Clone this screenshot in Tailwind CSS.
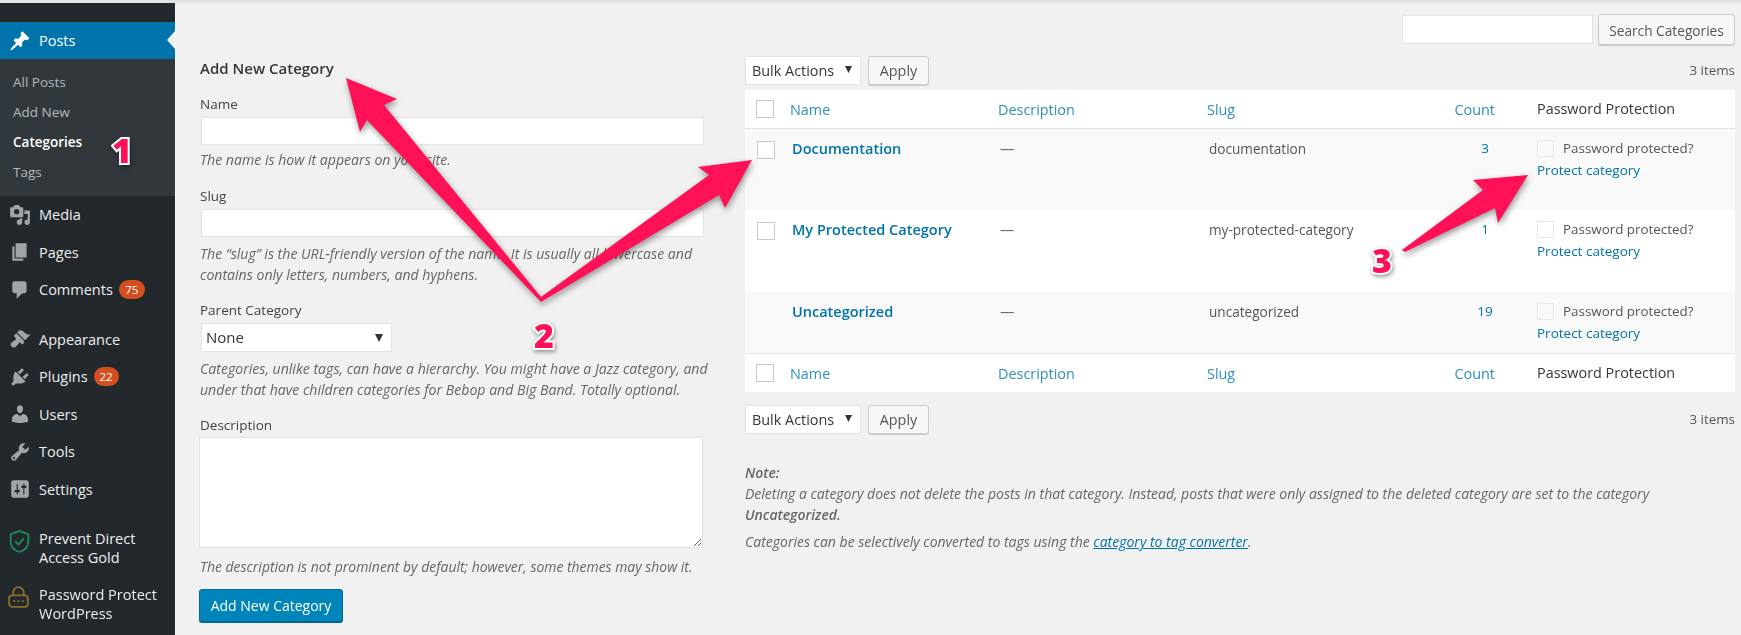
<!DOCTYPE html>
<html lang="en">
<head>
<meta charset="utf-8">
<title>Categories</title>
<script src="https://cdn.jsdelivr.net/npm/@tailwindcss/browser@4"></script>
</head>
<body class="m-0 h-[635px] w-[1741px] overflow-hidden bg-[#f1f1f1] font-['Open_Sans',sans-serif] text-[14.4px] leading-[21px] text-[#444]">
<div class="relative h-[635px] w-[1741px] overflow-hidden blur-[0.6px]">
  <div class="h-[3px] bg-[#e4e2e2]"></div>
  <div class="flex h-[632px]">
    <!-- sidebar -->
    <aside class="h-full w-[176px] shrink-0 border-r border-[#f8f8f8] bg-[#23282d] pt-[19px] text-[14.5px] text-[#eeeeee]">
      <div class="relative flex h-[37px] items-center bg-[#0073aa] text-white">
        <span class="flex w-[39px] justify-center"><svg class="h-[22px] w-[22px] fill-white" viewBox="0 0 20 20"><path d="M10.44 3.02l1.82-1.82 6.36 6.35-1.83 1.82c-1.05-.68-2.48-.57-3.41.36l-.75.75c-.92.93-1.04 2.35-.35 3.41l-1.83 1.82-2.41-2.41-2.8 2.79c-.42.42-3.38 2.71-3.8 2.29s1.86-3.39 2.28-3.81l2.79-2.79L4.1 9.36l1.83-1.82c1.05.69 2.48.57 3.4-.36l.75-.75c.93-.92 1.05-2.35.36-3.41z"/></svg></span>
        <span>Posts</span>
        <span class="absolute right-0 top-[9px] h-0 w-0 border-y-[9px] border-r-[8px] border-y-transparent border-r-[#f1f1f1]"></span>
      </div>
      <ul class="bg-[#32373c] px-[13px] py-[8px] text-[13.5px] text-[#b4b9be]">
        <li class="flex h-[30.25px] items-center">All Posts</li>
        <li class="flex h-[30.25px] items-center">Add New</li>
        <li class="flex h-[30.25px] items-center font-semibold text-white">Categories</li>
        <li class="flex h-[30.25px] items-center">Tags</li>
      </ul>
      <nav>
        <div class="flex h-[37.5px] items-center"><span class="flex w-[39px] justify-center"><svg class="h-[22px] w-[22px] fill-[#a0a5aa]" viewBox="0 0 20 20"><path d="M13 11V4c0-.55-.45-1-1-1h-1.67L9 1H5L3.67 3H2c-.55 0-1 .45-1 1v7c0 .55.45 1 1 1h10c.55 0 1-.45 1-1zM7 4.5c1.38 0 2.5 1.12 2.5 2.5S8.38 9.5 7 9.5 4.5 8.38 4.5 7 5.62 4.5 7 4.5zM14 6h5v10.5c0 1.38-1.12 2.5-2.5 2.5S14 17.88 14 16.5s1.12-2.5 2.5-2.5c.17 0 .34.02.5.05V9h-3V6zm-4 8.05V13h2v3.5c0 1.38-1.12 2.5-2.5 2.5S7 17.88 7 16.5 8.12 14 9.5 14c.17 0 .34.02.5.05z"/></svg></span><span>Media</span></div>
        <div class="flex h-[37.5px] items-center"><span class="flex w-[39px] justify-center"><svg class="h-[22px] w-[22px] fill-[#a0a5aa]" viewBox="0 0 20 20"><path d="M6 15V2h10v13H6zm-1 1h8v2H3V5h2v11z"/></svg></span><span>Pages</span></div>
        <div class="flex h-[37.5px] items-center"><span class="flex w-[39px] justify-center"><svg class="h-[22px] w-[22px] fill-[#a0a5aa]" viewBox="0 0 20 20"><path d="M5 2h9c1.1 0 2 .9 2 2v7c0 1.1-.9 2-2 2h-2l-5 5v-5H5c-1.1 0-2-.9-2-2V4c0-1.1.9-2 2-2z"/></svg></span><span>Comments</span><span class="ml-[6px] flex h-[19px] w-[26px] items-center justify-center rounded-full bg-[#d54e21] text-[11.5px] text-white">75</span></div>
      </nav>
      <nav class="mt-[12px]">
        <div class="flex h-[37.5px] items-center"><span class="flex w-[39px] justify-center"><svg class="h-[22px] w-[22px] fill-[#a0a5aa]" viewBox="0 0 20 20"><path d="M14.48 11.06L7.41 3.99l1.5-1.5c.5-.56 2.3-.47 3.51.32 1.21.8 1.43 1.28 2.91 2.1 1.18.64 2.45 1.26 4.45.85zm-.71.71L6.7 4.7 4.93 6.47c-.39.39-.39 1.02 0 1.41l1.06 1.06c.39.39.39 1.03 0 1.42-.6.6-1.43 1.11-2.21 1.69-.35.26-.7.53-1.01.84C1.43 13.23.99 15.55 2.22 16.78c.61.61 1.4.92 2.17.91.79 0 1.63-.39 2.18-.94.31-.31.58-.66.84-1.01.58-.78 1.09-1.61 1.69-2.21.39-.39 1.03-.39 1.42 0l1.06 1.06c.39.39 1.02.39 1.41 0z"/></svg></span><span>Appearance</span></div>
        <div class="flex h-[37.5px] items-center"><span class="flex w-[39px] justify-center"><svg class="h-[22px] w-[22px] fill-[#a0a5aa]" viewBox="0 0 20 20"><path d="M13.11 4.36L9.87 7.6 8 5.73l3.24-3.24c.35-.34 1.05-.2 1.56.32.52.51.66 1.21.31 1.55zm-8 1.77l.91-1.12 9.01 9.01-1.19.84c-.71.71-2.63 1.16-3.82 1.16H6.14L4.9 17.26c-.59.59-1.54.59-2.12 0-.59-.58-.59-1.53 0-2.12l1.24-1.24v-3.88c0-1.13.4-3.19 1.09-3.89zm7.26 3.97l3.24-3.24c.34-.35 1.04-.21 1.55.31.52.51.66 1.21.31 1.55l-3.24 3.25z"/></svg></span><span>Plugins</span><span class="ml-[6px] flex h-[19px] w-[25px] items-center justify-center rounded-full bg-[#d54e21] text-[11.5px] text-white">22</span></div>
        <div class="flex h-[37.5px] items-center"><span class="flex w-[39px] justify-center"><svg class="h-[22px] w-[22px] fill-[#a0a5aa]" viewBox="0 0 20 20"><path d="M10 9.25c-2.27 0-2.73-3.44-2.73-3.44C7 4.02 7.82 2 9.97 2c2.16 0 2.98 2.02 2.71 3.81 0 0-.41 3.44-2.68 3.44zm0 2.57L12.72 10c2.39 0 4.52 2.33 4.52 4.53v2.49s-3.65 1.13-7.24 1.13c-3.65 0-7.24-1.13-7.24-1.13v-2.49c0-2.25 1.94-4.48 4.47-4.48z"/></svg></span><span>Users</span></div>
        <div class="flex h-[37.5px] items-center"><span class="flex w-[39px] justify-center"><svg class="h-[22px] w-[22px] fill-[#a0a5aa]" viewBox="0 0 20 20"><path d="M16.68 9.77c-1.34 1.34-3.3 1.67-4.95.99l-5.41 6.52c-.99.99-2.59.99-3.58 0s-.99-2.59 0-3.57l6.52-5.42c-.68-1.65-.35-3.61.99-4.95 1.28-1.28 3.12-1.62 4.72-1.06l-2.89 2.89 2.82 2.82 2.86-2.87c.53 1.58.18 3.39-1.08 4.65zM3.81 16.21c.4.39 1.04.39 1.43 0 .4-.4.4-1.04 0-1.43-.39-.4-1.03-.4-1.43 0-.39.39-.39 1.03 0 1.43z"/></svg></span><span>Tools</span></div>
        <div class="flex h-[37.5px] items-center"><span class="flex w-[39px] justify-center"><svg class="h-[22px] w-[22px] fill-[#a0a5aa]" viewBox="0 0 20 20"><path d="M18 16V4c0-1.1-.9-2-2-2H4c-1.1 0-2 .9-2 2v12c0 1.1.9 2 2 2h12c1.1 0 2-.9 2-2zM8 11h1c.55 0 1 .45 1 1s-.45 1-1 1H8v1.5c0 .28-.22.5-.5.5s-.5-.22-.5-.5V13H6c-.55 0-1-.45-1-1s.45-1 1-1h1V5.5c0-.28.22-.5.5-.5s.5.22.5.5V11zm5-2h-1c-.55 0-1-.45-1-1s.45-1 1-1h1V5.5c0-.28.22-.5.5-.5s.5.22.5.5V7h1c.55 0 1 .45 1 1s-.45 1-1 1h-1v5.5c0 .28-.22.5-.5.5s-.5-.22-.5-.5V9z"/></svg></span><span>Settings</span></div>
      </nav>
      <nav class="mt-[12px] leading-[19px]">
        <div class="flex h-[56px] items-center"><span class="-mt-[14px] flex w-[39px] justify-center"><svg class="h-[25px] w-[25px] fill-none stroke-[#1e8a5a] stroke-[1.8]" viewBox="0 0 24 24"><path d="M12 2l8.5 3v7c0 5-3.5 8.500-8.500 10C7 20.500 3.500 17 3.500 12V5z"/><path d="M8 12l3 3 5-6"/></svg></span><span>Prevent Direct<br>Access Gold</span></div>
        <div class="flex h-[56px] items-center"><span class="-mt-[14px] flex w-[39px] justify-center"><svg class="h-[25px] w-[25px] fill-none stroke-[#8a6d2b] stroke-[1.8]" viewBox="0 0 24 24"><rect x="2" y="10" width="18" height="11" rx="3"/><path d="M6 10V7a5 5 0 0 1 10 0v3"/><path d="M6 15.500h10" stroke-dasharray="2 2"/></svg></span><span>Password Protect<br>WordPress</span></div>
      </nav>
    </aside>

    <!-- add form -->
    <section class="w-[569px] shrink-0 pl-[24px] pt-[54.5px]">
      <h2 class="text-[15px] font-semibold text-[#32373c]">Add New Category</h2>
      <label class="mt-[15px] block text-[13.5px]">Name</label>
      <input class="ml-[1px] mt-[2.5px] block h-[28px] w-[503px] border border-[#e3e3e3] bg-white" type="text">
      <p class="mt-[4px] text-[14.1px] italic text-[#666]">The name is how it appears on your site.</p>
      <label class="mt-[16px] block text-[13.5px]">Slug</label>
      <input class="ml-[1px] mt-[2px] block h-[28px] w-[503px] border border-[#e3e3e3] bg-white" type="text">
      <p class="mt-[5.5px] text-[14.1px] italic text-[#666]">The “slug” is the URL-friendly version of the name. It is usually all lowercase and<br>contains only letters, numbers, and hyphens.</p>
      <label class="mt-[15px] block text-[13.5px]">Parent Category</label>
      <div class="relative ml-[1px] mt-[2.5px] h-[29px] w-[191px]">
        <select class="block h-full w-full appearance-none rounded-none border border-[#e3e3e3] bg-white pl-[4px] text-[15px] text-[#32373c]"><option>None</option></select>
        <svg class="absolute right-[9px] top-[11px] h-[8px] w-[8px] fill-[#333]" viewBox="0 0 8 8"><path d="M0 0h8L4 8z"/></svg>
      </div>
      <p class="mt-[5.5px] text-[14.1px] italic text-[#666]">Categories, unlike tags, can have a hierarchy. You might have a Jazz category, and<br>under that have children categories for Bebop and Big Band. Totally optional.</p>
      <label class="mt-[15.5px] block text-[13.5px]">Description</label>
      <textarea class="-ml-[1px] mt-[1px] block h-[111px] w-[504px] border border-[#e3e3e3] bg-white"></textarea>
      <p class="mt-[7.5px] text-[13.95px] italic text-[#666]">The description is not prominent by default; however, some themes may show it.</p>
      <button class="-ml-[1px] mt-[12.5px] flex h-[33px] w-[144px] items-center justify-center rounded-[3px] border border-[#006799] bg-[#0085ba] text-[14px] text-white shadow-[0_1px_0_#006799]">Add New Category</button>
    </section>

    <!-- list -->
    <section class="w-[990px] shrink-0">
      <div class="mt-[11px] flex h-[31px] items-center justify-end">
        <input class="h-[29px] w-[191px] border border-[#e3e3e3] bg-white" type="text">
        <button class="ml-[5px] h-[31px] w-[137px] rounded-[3px] border border-[#cccccc] bg-[#f7f7f7] pt-[1px] text-[13.7px] text-[#555] shadow-[0_1px_0_#cccccc]">Search Categories</button>
      </div>
      <div class="mt-[10px] flex h-[30px] items-center">
        <div class="relative h-[29px] w-[116px]">
          <select class="block h-full w-full appearance-none rounded-none border border-[#e3e3e3] bg-white pl-[6px] pt-[1px] text-[14.4px] text-[#32373c]"><option>Bulk Actions</option></select>
          <svg class="absolute right-[9px] top-[10px] h-[7px] w-[7px] fill-[#333]" viewBox="0 0 8 8"><path d="M0 0h8L4 8z"/></svg>
        </div>
        <button class="ml-[7px] h-[29px] w-[61px] rounded-[3px] border border-[#cccccc] bg-[#f7f7f7] pt-[1px] text-[14.4px] text-[#555] shadow-[0_1px_0_#cccccc]">Apply</button>
        <span class="ml-auto text-[13.4px] text-[#555]">3 items</span>
      </div>
      <table class="mt-[5px] w-[990px] table-fixed border-collapse bg-white">
        <colgroup><col class="w-[36px]"><col class="w-[208px]"><col class="w-[209px]"><col class="w-[244px]"><col class="w-[86px]"><col></colgroup>
        <thead>
          <tr class="h-[38px] border-b border-[#e5e5e5] text-[#2d8fbe]">
            <th class="p-0 pl-[11px] align-middle"><span class="block h-[18px] w-[18px] border border-[#c8c8c8] bg-white"></span></th>
            <th class="pl-[9px] pt-[2px] text-left font-normal">Name</th>
            <th class="pl-[9px] pt-[2px] text-left font-normal">Description</th>
            <th class="pl-[9px] pt-[2px] text-left font-normal">Slug</th>
            <th class="pr-[33px] pt-[2px] text-right font-normal">Count</th>
            <th class="pl-[9px] text-left font-normal text-[#32373c]">Password Protection</th>
          </tr>
        </thead>
        <tbody class="align-top">
          <tr class="h-[82px] bg-[#f9f9f9]">
            <td class="pl-[12px] pt-[12px]"><span class="block h-[18px] w-[18px] border border-[#c8c8c8] bg-white"></span></td>
            <td class="pl-[11px] pt-[9px] text-[14.5px] font-semibold text-[#0073aa]">Documentation</td>
            <td class="pl-[11px] pt-[9px] text-[#666]">—</td>
            <td class="pl-[11px] pt-[9px] text-[13.6px] text-[#555]">documentation</td>
            <td class="pt-[9px] text-center text-[13.5px] text-[#0073aa]">3</td>
            <td class="pl-[9px] pt-[9px] text-[13.4px] text-[#555]"><span class="flex items-center"><span class="mr-[9px] block h-[17px] w-[17px] border border-[#e8e8e8]"></span>Password protected?</span><span class="mt-[1px] block text-[13.5px] text-[#0073aa]">Protect category</span></td>
          </tr>
          <tr class="h-[82px]">
            <td class="pl-[12px] pt-[12px]"><span class="block h-[18px] w-[18px] border border-[#c8c8c8] bg-white"></span></td>
            <td class="pl-[11px] pt-[9px] text-[14.5px] font-semibold text-[#0073aa]">My Protected Category</td>
            <td class="pl-[11px] pt-[9px] text-[#666]">—</td>
            <td class="pl-[11px] pt-[9px] text-[13.6px] text-[#555]">my-protected-category</td>
            <td class="pt-[9px] text-center text-[13.5px] text-[#0073aa]">1</td>
            <td class="pl-[9px] pt-[9px] text-[13.4px] text-[#555]"><span class="flex items-center"><span class="mr-[9px] block h-[17px] w-[17px] border border-[#e8e8e8]"></span>Password protected?</span><span class="mt-[1px] block text-[13.5px] text-[#0073aa]">Protect category</span></td>
          </tr>
          <tr class="h-[61px] bg-[#f9f9f9]">
            <td></td>
            <td class="pl-[11px] pt-[9px] text-[14.5px] font-semibold text-[#0073aa]">Uncategorized</td>
            <td class="pl-[11px] pt-[9px] text-[#666]">—</td>
            <td class="pl-[11px] pt-[9px] text-[13.6px] text-[#555]">uncategorized</td>
            <td class="pt-[9px] text-center text-[13.5px] text-[#0073aa]">19</td>
            <td class="pl-[9px] pt-[9px] text-[13.4px] text-[#555]"><span class="flex items-center"><span class="mr-[9px] block h-[17px] w-[17px] border border-[#e8e8e8]"></span>Password protected?</span><span class="mt-[1px] block text-[13.5px] text-[#0073aa]">Protect category</span></td>
          </tr>
        </tbody>
        <tfoot>
          <tr class="h-[39px] border-t border-[#e5e5e5] text-[#2d8fbe]">
            <td class="pl-[11px]"><span class="block h-[18px] w-[18px] border border-[#c8c8c8] bg-white"></span></td>
            <td class="pl-[9px] pt-[2px]">Name</td>
            <td class="pl-[9px] pt-[2px]">Description</td>
            <td class="pl-[9px] pt-[2px]">Slug</td>
            <td class="pr-[33px] pt-[2px] text-right">Count</td>
            <td class="pl-[9px] text-[#32373c]">Password Protection</td>
          </tr>
        </tfoot>
      </table>
      <div class="mt-[12px] flex h-[30px] items-center">
        <div class="relative h-[29px] w-[116px]">
          <select class="block h-full w-full appearance-none rounded-none border border-[#e3e3e3] bg-white pl-[6px] text-[14.4px] text-[#32373c]"><option>Bulk Actions</option></select>
          <svg class="absolute right-[9px] top-[10px] h-[7px] w-[7px] fill-[#333]" viewBox="0 0 8 8"><path d="M0 0h8L4 8z"/></svg>
        </div>
        <button class="ml-[7px] h-[29px] w-[61px] rounded-[3px] border border-[#cccccc] bg-[#f7f7f7] text-[14.4px] text-[#555] shadow-[0_1px_0_#cccccc]">Apply</button>
        <span class="ml-auto text-[13.4px] text-[#555]">3 items</span>
      </div>
      <div class="mt-[28px] text-[14px] italic text-[#666]">
        <p><strong class="font-semibold">Note:</strong><br>Deleting a category does not delete the posts in that category. Instead, posts that were only assigned to the deleted category are set to the category<br><strong class="font-semibold">Uncategorized.</strong></p>
        <p class="mt-[6px]">Categories can be selectively converted to tags using the <a class="text-[#0073aa] underline">category to tag converter</a>.</p>
      </div>
    </section>
  </div>

  <!-- annotation overlay -->
  <svg class="pointer-events-none absolute left-0 top-0 h-[635px] w-[1741px] drop-shadow-[1px_3px_3px_rgba(0,0,0,0.4)]" viewBox="0 0 1741 635">
    <path class="fill-[#ff1158]" d="M346 78L397 99L384 105L541 297L709 175L698 167L752 160L725 208L719 195L541 302L367 120L360 132Z"/>
    <path class="fill-[#ff1158]" d="M1528 175L1473 180L1483 190L1402 250L1405 252L1495 208L1498 223Z"/>
  </svg>
  <span class="absolute left-[112px] top-[128px] text-[34px] font-extrabold leading-[44px] text-[#ff1158] [-webkit-text-stroke:4px_white] [paint-order:stroke_fill] drop-shadow-[1px_2px_2px_rgba(0,0,0,0.4)]">1</span>
  <span class="absolute left-[534px] top-[313px] text-[34px] font-extrabold leading-[44px] text-[#ff1158] [-webkit-text-stroke:4px_white] [paint-order:stroke_fill] drop-shadow-[1px_2px_2px_rgba(0,0,0,0.4)]">2</span>
  <span class="absolute left-[1372px] top-[238px] text-[34px] font-extrabold leading-[44px] text-[#ff1158] [-webkit-text-stroke:4px_white] [paint-order:stroke_fill] drop-shadow-[1px_2px_2px_rgba(0,0,0,0.4)]">3</span>
</div>
</body>
</html>
